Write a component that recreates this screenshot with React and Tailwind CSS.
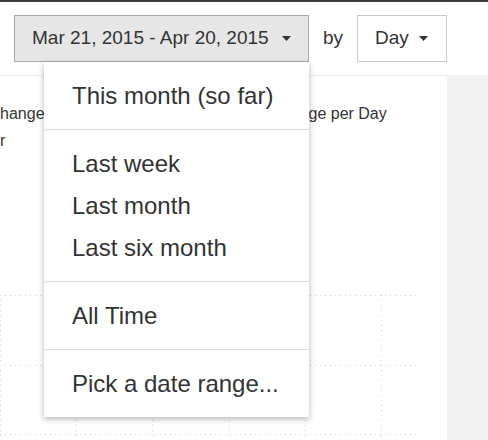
import { useState } from "react";

const groups = [
  ["This month (so far)"],
  ["Last week", "Last month", "Last six month"],
  ["All Time"],
  ["Pick a date range..."],
];

function Caret() {
  return (
    <svg width="9" height="5" viewBox="0 0 9 5" className="shrink-0">
      <path d="M0 0h9L4.5 5z" fill="#333" />
    </svg>
  );
}

function RangeMenu() {
  return (
    <div className="absolute left-[30px] top-[47px] z-10 w-[265px] bg-white shadow-[0_2px_6px_rgba(0,0,0,0.3)]">
      {groups.map((items, i) => (
        <div key={i} className={i > 0 ? "border-t border-[#dcdcdc] py-[12.5px]" : "py-[12.5px]"}>
          {items.map((label) => (
            <div key={label} className="flex h-[42px] items-center pl-[28px] text-[24px] text-[#333] cursor-pointer">
              {label}
            </div>
          ))}
        </div>
      ))}
    </div>
  );
}

function Grid() {
  const cols = [0.5, 76.5, 152.5, 229.5, 305.5, 381.5];
  const rows = [5.5, 75.5, 144.5];
  return (
    <svg width="447" height="150" className="block">
      {rows.map((y) => (
        <line key={y} x1="0" x2="417" y1={y} y2={y} stroke="#cfcfcf" strokeDasharray="1 4" />
      ))}
      {cols.map((x) => (
        <line key={x} x1={x} x2={x} y1="5" y2="150" stroke="#cfcfcf" strokeDasharray="1 4" />
      ))}
    </svg>
  );
}

export default function App() {
  const [open] = useState(true);
  return (
    <div className="flex h-[440px] w-[488px] flex-col overflow-hidden border-t-2 border-[#3c3c3c] bg-white font-['Liberation_Sans',Arial,sans-serif] text-[#333]">
      {/* toolbar */}
      <header className="flex items-center gap-[14px] px-[14px] pt-[13px] pb-[13px] text-[19px]">
        <div className="relative">
          <button className="flex h-[47px] w-[295px] items-center gap-[13px] border border-[#a9a9a9] bg-[#e6e6e6] pl-[17px]">
            <span>Mar 21, 2015 - Apr 20, 2015</span>
            <Caret />
          </button>
          {open && <RangeMenu />}
        </div>
        <span>by</span>
        <button className="flex h-[47px] w-[90px] items-center gap-[10px] border border-[#c8c8c8] bg-white pl-[17px]">
          <span>Day</span>
          <Caret />
        </button>
      </header>

      {/* body */}
      <div className="flex flex-1">
        <main className="w-[447px] border-t border-[#ececec] pt-[24px]">
          <div className="flex text-[16px] leading-[27px]">
            <div className="-ml-[11.5px] w-[218px] shrink-0">
              <div>Change</div>
              <div className="-ml-[17px]">User</div>
            </div>
            <div>Average Change per Day</div>
          </div>
          <div className="mt-[136px]">
            <Grid />
          </div>
        </main>
        <aside className="flex-1 bg-[#f2f2f2]" />
      </div>
    </div>
  );
}
